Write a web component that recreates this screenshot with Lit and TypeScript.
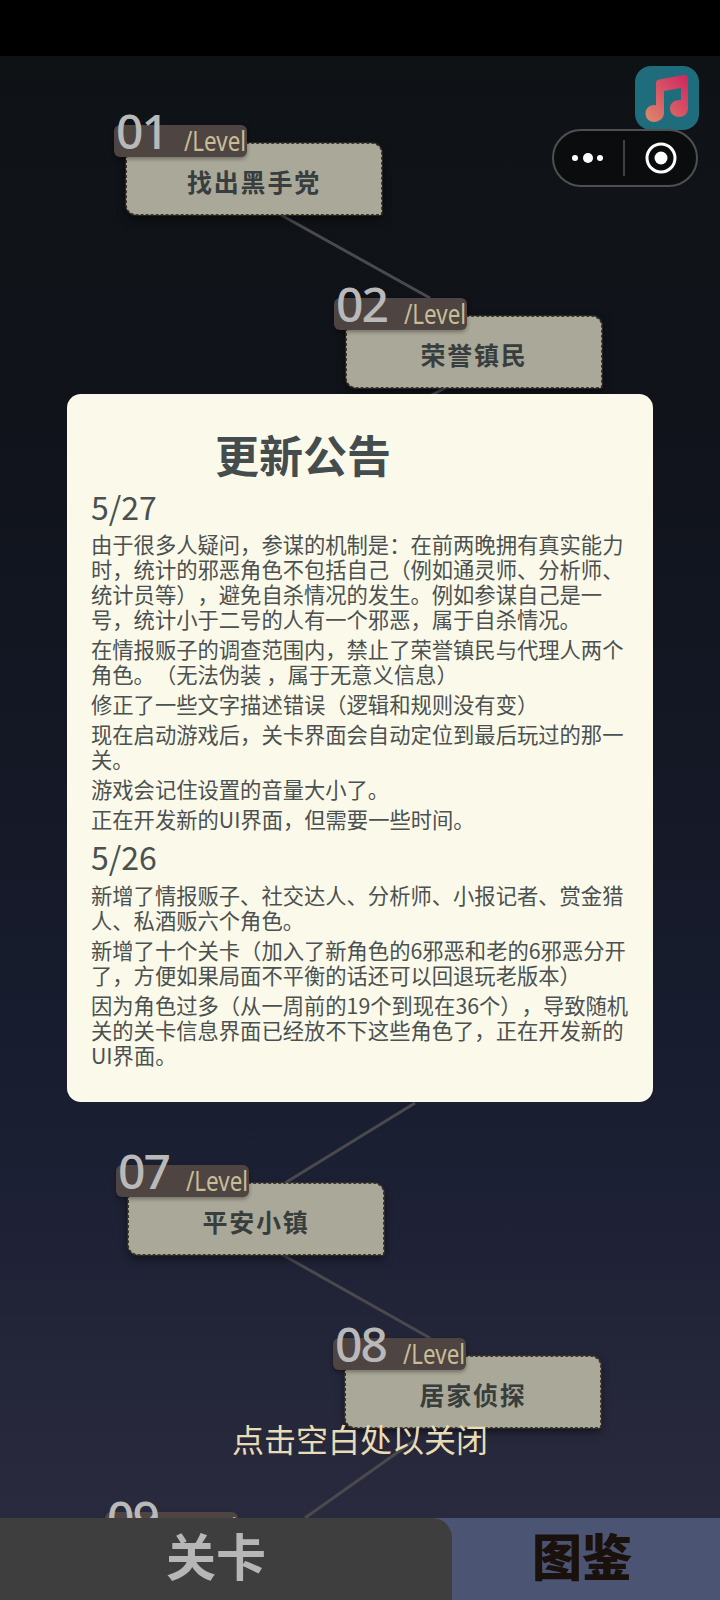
import { LitElement, html, svg, css } from 'lit';
import { customElement } from 'lit/decorators.js';

const MAP_TOP = 56;

const nodes = [
  { no: '01', name: '找出黑手党', x: 126, y: 143 },
  { no: '02', name: '荣誉镇民', x: 346, y: 316 },
  { no: '07', name: '平安小镇', x: 128, y: 1183 },
  { no: '08', name: '居家侦探', x: 345, y: 1356 },
  { no: '09', name: '', x: 117, y: 1530 },
];

const links = [
  [281, 215, 430, 298],
  [445, 388, 430, 396],
  [415, 1103, 285, 1183],
  [281, 1254, 430, 1338],
  [415, 1440, 305, 1518],
];

const notices = [
  {
    date: '5/27',
    items: [
      '由于很多人疑问，参谋的机制是：在前两晚拥有真实能力时，统计的邪恶角色不包括自己（例如通灵师、分析师、统计员等），避免自杀情况的发生。例如参谋自己是一号，统计小于二号的人有一个邪恶，属于自杀情况。',
      '在情报贩子的调查范围内，禁止了荣誉镇民与代理人两个角色。（无法伪装 ，属于无意义信息）',
      '修正了一些文字描述错误（逻辑和规则没有变）',
      '现在启动游戏后，关卡界面会自动定位到最后玩过的那一关。',
      '游戏会记住设置的音量大小了。',
      '正在开发新的UI界面，但需要一些时间。',
    ],
  },
  {
    date: '5/26',
    items: [
      '新增了情报贩子、社交达人、分析师、小报记者、赏金猎人、私酒贩六个角色。',
      '新增了十个关卡（加入了新角色的6邪恶和老的6邪恶分开了，方便如果局面不平衡的话还可以回退玩老版本）',
      '因为角色过多（从一周前的19个到现在36个），导致随机关的关卡信息界面已经放不下这些角色了，正在开发新的UI界面。',
    ],
  },
];

@customElement('app-root')
export class AppRoot extends LitElement {
  static styles = css`
    :host {
      display: block;
      width: 720px;
      height: 1600px;
      font-family: 'Noto Sans CJK SC', 'Noto Sans', sans-serif;
    }

    .page {
      position: relative;
      display: flex;
      flex-direction: column;
      height: 1600px;
      background: #000;
      overflow: hidden;
    }

    .statusbar {
      height: 56px;
      flex: none;
    }

    .map {
      position: relative;
      flex: 1;
      overflow: hidden;
      background: linear-gradient(180deg, #0f1215 0%, #10131a 25%, #181d30 70%, #2a2a3e 100%);
    }

    .links {
      position: absolute;
      inset: 0;
    }

    .node {
      position: absolute;
      width: 256px;
      height: 72px;
    }

    .card {
      box-sizing: border-box;
      display: flex;
      align-items: center;
      justify-content: center;
      height: 100%;
      padding-top: 4px;
      background: #aaa999;
      border: 1.5px dashed #3f3a2c;
      border-radius: 10px 10px 2px 10px;
      box-shadow: 0 0 0 1px rgba(75, 69, 54, 0.45), 0 4px 8px rgba(0, 0, 0, 0.5);
      color: #383d3d;
      font-size: 25px;
      font-weight: 700;
      letter-spacing: 1.8px;
    }

    .badge {
      position: absolute;
      left: -12px;
      top: -18px;
      width: 133px;
      height: 32px;
      background: #4e4543;
      border-radius: 6px;
      box-shadow: 0 2px 4px rgba(0, 0, 0, 0.35);
    }

    .no {
      position: absolute;
      left: 2px;
      top: -28px;
      font-family: 'Noto Sans', sans-serif;
      font-size: 48px;
      font-weight: 500;
      line-height: 67px;
      color: #b9b9b9;
      letter-spacing: -2px;
    }

    .unit {
      position: absolute;
      left: 70px;
      top: -3px;
      font-family: 'Noto Sans', sans-serif;
      font-size: 28px;
      line-height: 36px;
      color: #c8bd96;
      transform: scaleX(0.8);
      transform-origin: left center;
    }

    .music {
      position: absolute;
      left: 635px;
      top: 66px;
      width: 64px;
      height: 64px;
    }

    .capsule {
      position: absolute;
      left: 552px;
      top: 129px;
      box-sizing: border-box;
      display: flex;
      align-items: center;
      width: 146px;
      height: 58px;
      background: #0b0c0d;
      border: 2px solid #4d4f50;
      border-radius: 29px;
    }

    .capsule .more,
    .capsule .target {
      display: block;
      flex: none;
    }

    .capsule .more {
      margin-left: 17px;
    }

    .capsule .sep {
      width: 2px;
      height: 36px;
      margin: 0 20px 0 12px;
      background: #3f4142;
    }

    .modal {
      position: absolute;
      left: 67px;
      top: 394px;
      box-sizing: border-box;
      width: 586px;
      height: 708px;
      padding: 30px 24px 0;
      background: #fbfaea;
      border-radius: 14px;
      color: #4b5151;
      text-spacing-trim: space-all;
    }

    .modal h1 {
      margin: 0 0 0 124px;
      font-size: 44px;
      line-height: 60px;
      font-weight: 700;
      color: #444c4e;
    }

    .modal h2 {
      margin: 0 0 3px;
      font-size: 32px;
      line-height: 44px;
      font-weight: 400;
    }

    .modal h2:not(:first-of-type) {
      margin: -2px 0 4px;
    }

    .modal p {
      margin: 0 0 5px;
      font-size: 21.3px;
      line-height: 25px;
    }

    .hint {
      position: absolute;
      left: 0;
      right: 0;
      top: 1416px;
      text-align: center;
      font-size: 32px;
      line-height: 44px;
      color: #e8dcb4;
    }

    .tabs {
      display: grid;
      grid-template-columns: 452px 1fr;
      flex: none;
      height: 82px;
      background: #4c5474;
      font-size: 50px;
      line-height: 72px;
      text-align: center;
    }

    .tab-on {
      padding-right: 20px;
      background: #3f3e3f;
      border-radius: 0 20px 0 0;
      color: #b6b6b6;
      font-weight: 700;
    }

    .tab-off {
      padding-right: 8px;
      color: #1a100c;
      font-weight: 900;
    }
  `;

  render() {
    return html`<div class="page">
      <div class="statusbar"></div>
      <div class="map">
        <svg class="links" width="720" height="1462">
          ${links.map(
            ([x1, y1, x2, y2]) => svg`<line
              x1=${x1}
              y1=${y1 - MAP_TOP}
              x2=${x2}
              y2=${y2 - MAP_TOP}
              stroke="#4a4a4e"
              stroke-width="3"
            ></line>`
          )}
        </svg>
        ${nodes.map(
          (n) => html`<div class="node" style="left:${n.x}px;top:${n.y - MAP_TOP}px">
            <div class="card">${n.name}</div>
            <div class="badge">
              <span class="no">${n.no}</span>
              <span class="unit">/Level</span>
            </div>
          </div>`
        )}
      </div>
      <div class="tabs">
        <div class="tab-on">关卡</div>
        <div class="tab-off">图鉴</div>
      </div>

      <div class="modal">
        <h1>更新公告</h1>
        ${notices.map(
          (block) => html`<h2>${block.date}</h2>
            ${block.items.map((item) => html`<p>${item}</p>`)}`
        )}
      </div>
      <div class="hint">点击空白处以关闭</div>

      <svg class="music" viewBox="0 0 64 64">
        <defs>
          <linearGradient id="note" x1="0" y1="1" x2="1" y2="0">
            <stop offset="0" stop-color="#dc8a6c"></stop>
            <stop offset="1" stop-color="#d0245f"></stop>
          </linearGradient>
        </defs>
        <rect width="64" height="64" rx="16" fill="#1f6d7c"></rect>
        <path
          fill="url(#note)"
          d="M21 17 Q21 14 24 13.500 L49 9 Q53 8.500 53 12 L53 42 C53 48 49 51 44 51 C39 51 35 47 35 42.500 C35 37.500 39 34 44 34 C44.700 34 45.400 34.100 46 34.200 L46 22 L29 25 L29 47 C29 52.500 24 56 19 56 C14 56 10.500 52 10.500 47.500 C10.500 42.500 14.500 39 19 39 C19.500 39 20.300 39.100 21 39.300 Z"
        ></path>
      </svg>
      <div class="capsule">
        <svg class="more" width="40" height="14" viewBox="0 0 40 14">
          <circle cx="4" cy="7" r="3" fill="#fff"></circle>
          <circle cx="17" cy="7" r="5" fill="#fff"></circle>
          <circle cx="29" cy="7" r="3" fill="#fff"></circle>
        </svg>
        <div class="sep"></div>
        <svg class="target" width="32" height="32" viewBox="0 0 32 32">
          <circle cx="16" cy="16" r="14" fill="none" stroke="#fff" stroke-width="3"></circle>
          <circle cx="16" cy="16" r="6.500" fill="#fff"></circle>
        </svg>
      </div>
    </div>`;
  }
}
